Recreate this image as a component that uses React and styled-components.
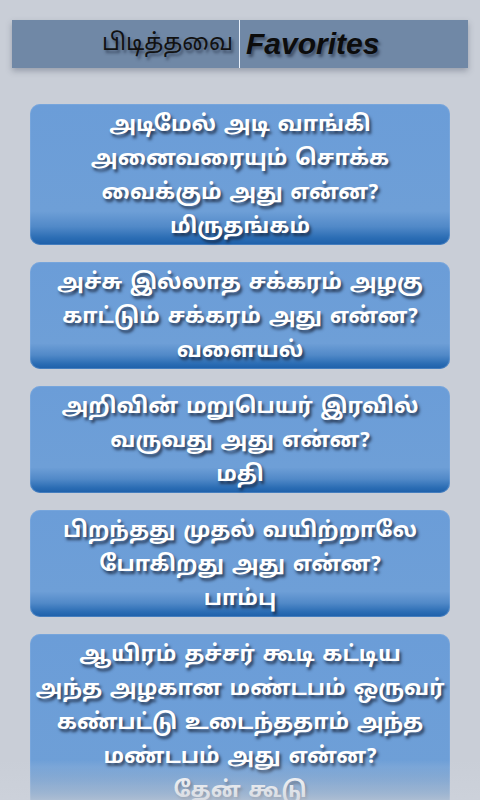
import React from "react";
import styled, { createGlobalStyle } from "styled-components";

const riddles = [
  {
    q: ["அடிமேல் அடி வாங்கி", "அனைவரையும் சொக்க", "வைக்கும் அது என்ன?"],
    a: "மிருதங்கம்",
  },
  {
    q: ["அச்சு இல்லாத சக்கரம் அழகு", "காட்டும் சக்கரம் அது என்ன?"],
    a: "வளையல்",
  },
  {
    q: ["அறிவின் மறுபெயர் இரவில்", "வருவது அது என்ன?"],
    a: "மதி",
  },
  {
    q: ["பிறந்தது முதல் வயிற்றாலே", "போகிறது அது என்ன?"],
    a: "பாம்பு",
  },
  {
    q: [
      "ஆயிரம் தச்சர் கூடி கட்டிய",
      "அந்த அழகான மண்டபம் ஒருவர்",
      "கண்பட்டு உடைந்ததாம் அந்த",
      "மண்டபம் அது என்ன?",
    ],
    a: "தேன் கூடு",
  },
];

const GlobalStyle = createGlobalStyle`
  html, body {
    margin: 0;
    padding: 0;
    background: #c9ced7;
    overflow: hidden;
  }
  body {
    font-family: "Noto Sans Tamil", "Lohit Tamil", "Noto Sans", "DejaVu Sans", sans-serif;
  }
`;

const Page = styled.div`
  position: relative;
  height: 800px;
  overflow: hidden;
  background: #c9ced7;
  display: flex;
  flex-direction: column;
`;

const HeaderWrap = styled.div`
  padding: 20px 12px 0;
`;

const HeaderBar = styled.div`
  height: 48px;
  background: #7088a6;
  display: grid;
  grid-template-columns: 227px 1px 1fr;
  align-items: center;
  box-shadow: 0 3px 6px rgba(60, 70, 90, 0.35);
`;

const HeaderTamil = styled.span`
  justify-self: end;
  padding-right: 6px;
  font-size: 23px;
  color: #111;
  text-shadow: 2px 3px 3px rgba(30, 40, 60, 0.6);
`;

const Divider = styled.div`
  align-self: stretch;
  background: #e8f0fb;
`;

const HeaderLatin = styled.span`
  padding-left: 6px;
  font-family: "Liberation Sans", Arial, sans-serif;
  font-weight: bold;
  font-style: italic;
  font-size: 30px;
  color: #0c0c0c;
  text-shadow: 2px 3px 3px rgba(30, 40, 60, 0.6);
`;

const List = styled.div`
  display: flex;
  flex-direction: column;
  gap: 17px;
  padding: 36px 30px 0;
`;

const Card = styled.div`
  border-radius: 10px;
  padding: 5px 2px 0;
  background: linear-gradient(
    to bottom,
    #6b9dd8 0%,
    #6e9fd7 76%,
    #5189c8 87%,
    #2b6db4 95%,
    #1d5fa9 100%
  );
  box-shadow: inset 0 0 0 1px rgba(140, 180, 230, 0.35);
  text-align: center;
`;

const Line = styled.div`
  font-size: 22px;
  font-weight: bold;
  line-height: 34px;
  word-spacing: 2px;
  color: #ffffff;
  text-shadow: 2px 3px 3px rgba(20, 30, 50, 0.75);
  white-space: nowrap;
`;

const Fade = styled.div`
  position: absolute;
  left: 0;
  right: 0;
  bottom: 0;
  height: 40px;
  background: linear-gradient(
    to bottom,
    rgba(205, 210, 219, 0),
    rgba(205, 210, 219, 0.8) 100%
  );
  pointer-events: none;
`;

export default function App() {
  return (
    <Page>
      <GlobalStyle />
      <HeaderWrap>
        <HeaderBar>
          <HeaderTamil>பிடித்தவை</HeaderTamil>
          <Divider />
          <HeaderLatin>Favorites</HeaderLatin>
        </HeaderBar>
      </HeaderWrap>
      <List>
        {riddles.map((r, i) => (
          <Card key={i}>
            {r.q.map((l, j) => (
              <Line key={j}>{l}</Line>
            ))}
            <Line>{r.a}</Line>
          </Card>
        ))}
      </List>
      <Fade />
    </Page>
  );
}
